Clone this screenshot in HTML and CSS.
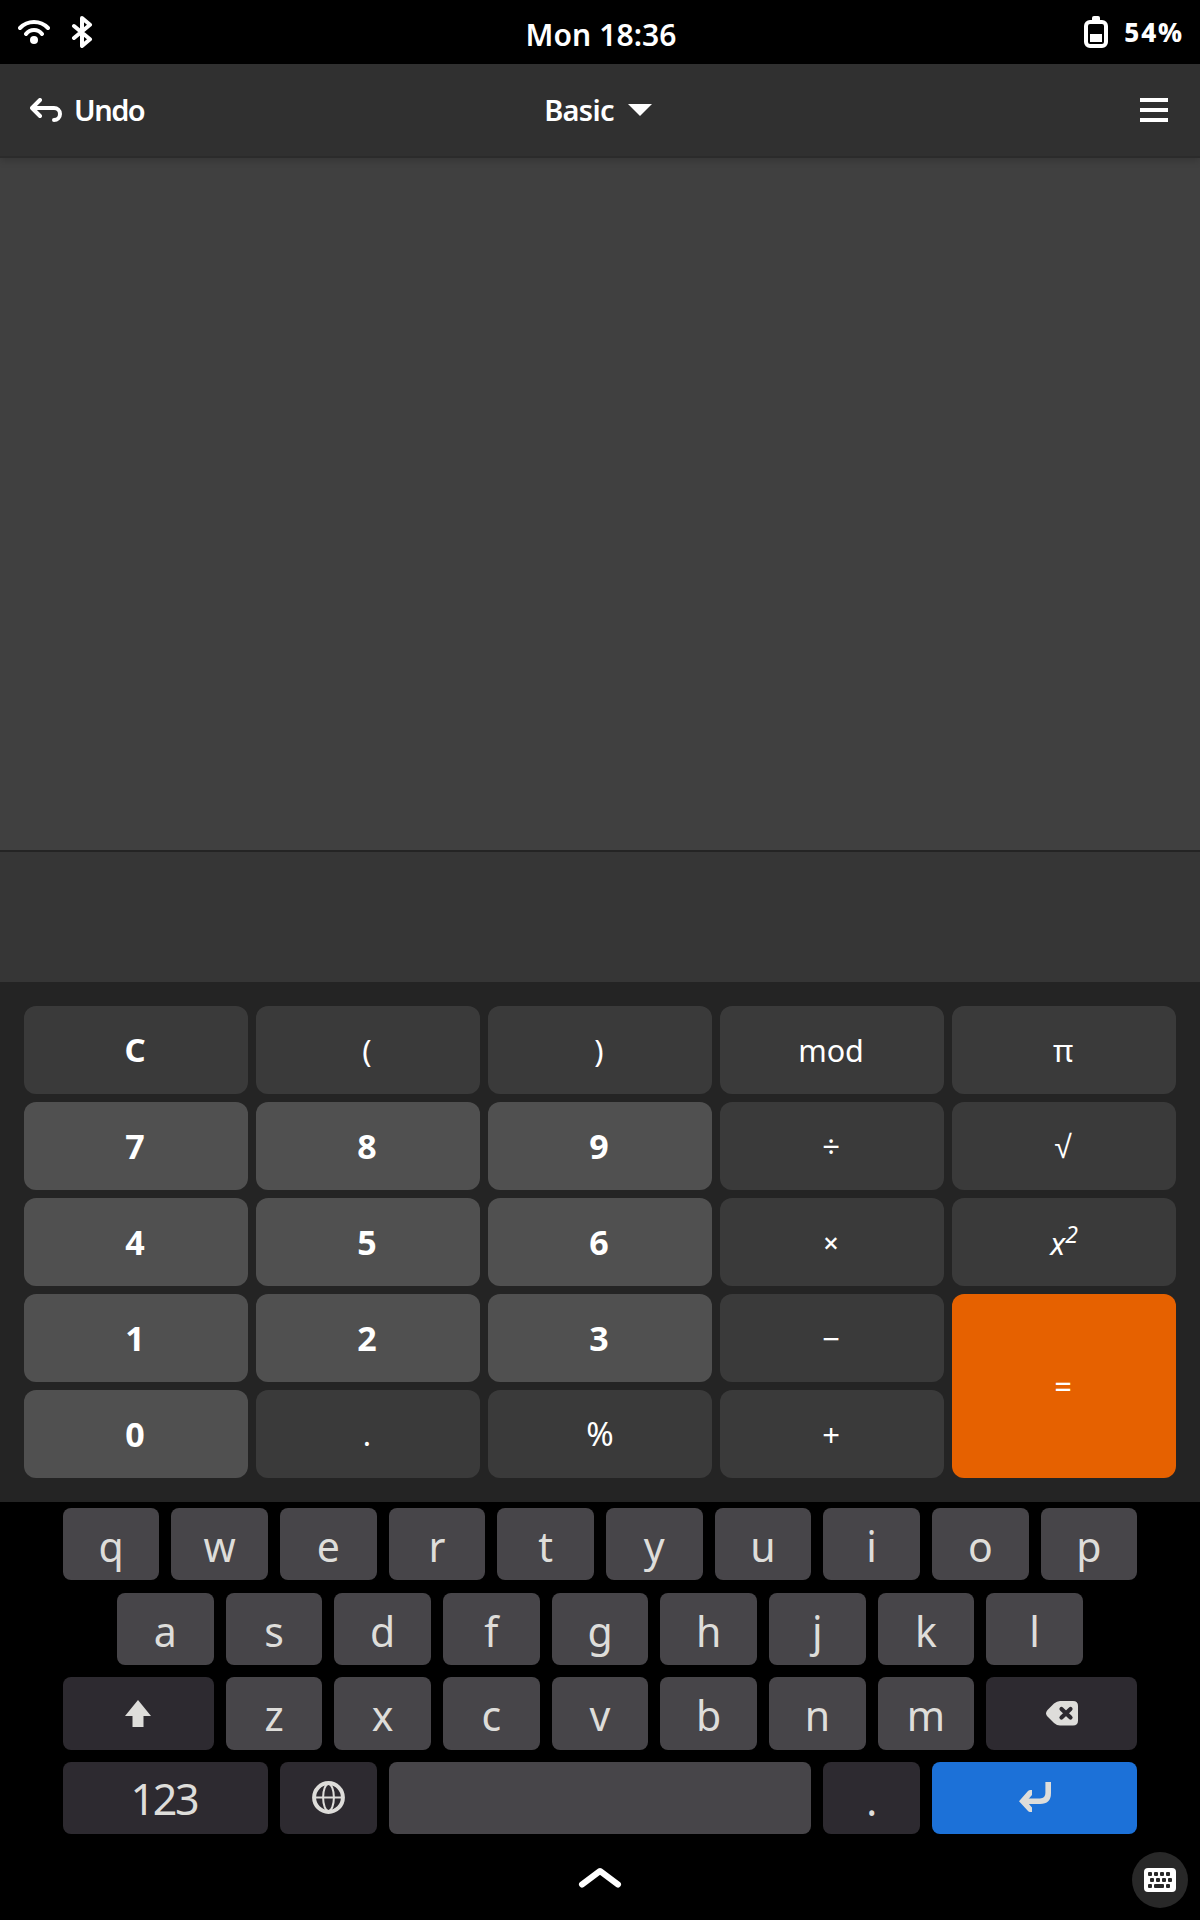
FILE: index.html
```html
<!DOCTYPE html>
<html lang="en">
<head>
<meta charset="utf-8">
<title>Calculator</title>
<link rel="stylesheet" href="styles.css">
</head>
<body>
<div class="status">
  <div class="status-icons">
    <svg width="32" height="32" viewBox="0 0 32 32" fill="none" stroke="#fff" stroke-width="4" stroke-linecap="round"><path d="M2 12a19.3 19.3 0 0 1 28 0M8 18a10 10 0 0 1 16 0"/><circle cx="16" cy="24" r="4" fill="#fff" stroke="none"/></svg>
    <svg width="32" height="32" viewBox="0 0 32 32" fill="none" stroke="#fff" stroke-width="4" stroke-linecap="round" stroke-linejoin="round"><path d="M8 10l16 13.3-8 6.7V2l8 6.7L8 22"/></svg>
  </div>
  <div class="clock">Mon 18:36</div>
  <div class="battery">
    <svg width="24" height="32" viewBox="0 0 24 32"><path fill="#fff" d="M8 5V2q0-2 2-2h4q2 0 2 2v3z"/><rect x="2" y="6" width="20" height="24" rx="4" fill="none" stroke="#fff" stroke-width="4"/><path fill="#fff" d="M6 18h12v8H6z"/></svg>
    <span class="percent">54%</span>
  </div>
</div>
<header class="header">
  <div class="undo">
    <svg width="32" height="24" viewBox="0 0 32 24" fill="none" stroke="#fff" stroke-width="4" stroke-linecap="round" stroke-linejoin="round"><path d="M10 2L2 10l8 8M2 10h22a6 6 0 0 1 0 12"/></svg>
    <span class="undo-label">Undo</span>
  </div>
  <div class="mode">
    <span class="mode-label">Basic</span>
    <svg width="24" height="12" viewBox="0 0 24 12"><path fill="#fff" d="M0 0h24L12 12z"/></svg>
  </div>
  <svg class="menu" width="28" height="24" viewBox="0 0 28 24"><path fill="#fff" d="M0 0h28v4H0zM0 10h28v4H0zM0 20h28v4H0z"/></svg>
</header>
<main class="history"></main>
<div class="entry"></div>
<div class="pad">
  <div class="btn clear">C</div><div class="btn">(</div><div class="btn">)</div><div class="btn mod">mod</div><div class="btn">π</div>
  <div class="btn num">7</div><div class="btn num">8</div><div class="btn num">9</div><div class="btn op">÷</div><div class="btn root">√</div>
  <div class="btn num">4</div><div class="btn num">5</div><div class="btn num">6</div><div class="btn op times">×</div><div class="btn square"><i>x</i><i class="exp">2</i></div>
  <div class="btn num">1</div><div class="btn num">2</div><div class="btn num">3</div><div class="btn op">−</div><div class="btn op equals">=</div>
  <div class="btn num">0</div><div class="btn">.</div><div class="btn percent-key">%</div><div class="btn op">+</div>
</div>
<div class="keyboard">
  <div class="key">q</div><div class="key">w</div><div class="key">e</div><div class="key">r</div><div class="key">t</div><div class="key">y</div><div class="key">u</div><div class="key">i</div><div class="key">o</div><div class="key">p</div>
  <div class="key home">a</div><div class="key">s</div><div class="key">d</div><div class="key">f</div><div class="key">g</div><div class="key">h</div><div class="key">j</div><div class="key">k</div><div class="key">l</div>
  <div class="key wide dark icon"><svg width="26" height="27" viewBox="0 0 26 27"><path fill="#deddda" d="M13 0l13 16h-7.500v11h-11V16H0z"/></svg></div>
  <div class="key">z</div><div class="key">x</div><div class="key">c</div><div class="key">v</div><div class="key">b</div><div class="key">n</div><div class="key">m</div>
  <div class="key wide dark icon"><svg width="32" height="25" viewBox="0 0 32 25"><path fill="#deddda" d="M14 0h13q5 0 5 5v14.500q0 5-5 5H14q-3 0-6-2.500l-6.500-6.500q-3-3.250 0-6.500L8 2.500Q11 0 14 0z"/><path d="M15.500 8l9 8.500m0-8.500l-9 8.500" stroke="#2d2a30" stroke-width="4.200" stroke-linecap="round"/></svg></div>
  <div class="key wider dark digits">123</div>
  <div class="key dark icon"><svg width="33" height="33" viewBox="0 0 33 33" fill="none" stroke="#deddda"><circle cx="16.500" cy="16.500" r="14.400" stroke-width="4"/><ellipse cx="16.500" cy="16.500" rx="5.400" ry="13.500" stroke-width="2"/><path d="M2 16.500h29" stroke-width="2"/></svg></div>
  <div class="key space"></div>
  <div class="key dark">.</div>
  <div class="key wider enter icon"><svg width="32" height="31" viewBox="0 0 32 31"><path d="M29.200 0v11q0 8.200-8.200 8.200H4.500" fill="none" stroke="#deddda" stroke-width="5.600"/><path fill="#deddda" d="M0 19.200L9 9q1-1 2.500-1H13v5l-5.500 6.200 5.500 6.300V30h-2q-1.200 0-2-1z"/></svg></div>
</div>
<footer class="bottom">
  <svg class="chevron" width="44" height="22" viewBox="0 0 44 22"><path d="M4 17.500L22 4l18 13.500" fill="none" stroke="#fff" stroke-width="6" stroke-linecap="round" stroke-linejoin="round"/></svg>
  <div class="osk"><svg width="32" height="24" viewBox="0 0 32 24"><rect width="32" height="24" rx="4" fill="#fff"/><g fill="#282828"><rect x="4" y="4" width="4" height="4" rx="1"/><rect x="10" y="4" width="4" height="4" rx="1"/><rect x="16" y="4" width="4" height="4" rx="1"/><rect x="22" y="4" width="4" height="4" rx="1"/><rect x="6" y="10" width="4" height="4" rx="1"/><rect x="12" y="10" width="4" height="4" rx="1"/><rect x="18" y="10" width="4" height="4" rx="1"/><rect x="24" y="10" width="4" height="4" rx="1"/><rect x="4" y="16" width="4" height="4" rx="1"/><rect x="10" y="16" width="10" height="4" rx="1"/><rect x="22" y="16" width="4" height="4" rx="1"/></g></svg></div>
</footer>
</body>
</html>
```
FILE: styles.css
```css
* { box-sizing: border-box; }
svg { display: block; flex: none; }
body {
  margin: 0;
  width: 1200px;
  height: 1920px;
  display: flex;
  flex-direction: column;
  background: #000;
  color: #fff;
  font-family: "Noto Sans", sans-serif;
  overflow: hidden;
}
.status {
  height: 64px;
  display: grid;
  grid-template-columns: 1fr auto 1fr;
  grid-template-rows: 64px;
  align-items: center;
  padding: 0 16px 0 18px;
}
.status-icons { display: flex; gap: 16px; }
.clock { font-size: 30px; line-height: 58px; font-weight: 600; padding-top: 6px; letter-spacing: 0.1px; }
.battery { display: flex; align-items: center; justify-content: flex-end; gap: 16px; }
.percent { font-size: 26px; line-height: 64px; font-weight: 800; letter-spacing: 1.900px; }
.header {
  height: 94px;
  display: grid;
  grid-template-columns: 1fr auto 1fr;
  align-items: center;
  padding: 0 32px 0 30px;
  background: #303030;
  border-bottom: 2px solid #2b2b2b;
  box-shadow: 0 2px 8px rgba(0, 0, 0, 0.2);
  position: relative;
}
.undo, .mode { display: flex; align-items: center; }
.undo { gap: 12px; }
.mode { gap: 14px; margin-right: 2px; }
.undo-label, .mode-label { font-size: 29px; line-height: 88px; font-weight: 600; }
.undo-label { letter-spacing: -1.500px; }
.mode-label { letter-spacing: -0.700px; }
.menu { justify-self: end; }
.history { height: 692px; background: #404040; }
.entry {
  height: 132px;
  background: #363636;
  border-top: 2px solid #242424;
}
.pad {
  height: 520px;
  padding: 24px;
  display: grid;
  grid-template-columns: repeat(5, 1fr);
  grid-template-rows: repeat(5, 88px);
  gap: 8px;
  background: #242424;
}
.btn {
  display: flex;
  justify-content: center;
  align-items: center;
  border-radius: 12px;
  padding-right: 2px;
  background: #3a3a3a;
  font-size: 31px;
  line-height: 88px;
}
.num, .clear { font-size: 34px; font-weight: 700; }
.clear { font-size: 33px; }
.num { background: #505050; }
.mod { font-size: 30.500px; }
.root { font-size: 32px; font-weight: 500; }
.times { font-size: 27px; font-weight: 500; padding-top: 2px; }
.square { padding: 2px 0 0; }
.exp { font-size: 23px; line-height: 1; padding-bottom: 18px; }
.percent-key { font-size: 33px; padding-right: 0; }
.equals { grid-row: span 2; background: #e66100; }
.keyboard {
  height: 332px;
  padding: 6px 62.800px 0;
  display: grid;
  grid-template-columns: repeat(20, 1fr);
  grid-template-rows: repeat(4, 72.400px);
  gap: 12.200px;
}
.key {
  grid-column: span 2;
  display: flex;
  justify-content: center;
  align-items: center;
  border-radius: 8px;
  padding-top: 4px;
  background: #474549;
  color: #deddda;
  font-size: 41px;
  line-height: 68px;
}
.icon { padding: 0; }
.home { grid-column: 2 / span 2; }
.wide { grid-column: span 3; }
.wider { grid-column: span 4; }
.space { grid-column: span 8; }
.dark { background: #2d2a30; }
.enter { background: #1c71d8; }
.digits { font-size: 43px; letter-spacing: -2.400px; padding: 3px 3px 0 0; }
.bottom {
  flex: 1;
  display: grid;
  grid-template-columns: 1fr auto 1fr;
  align-items: center;
  padding: 6px 12px 0;
}
.chevron { grid-column: 2; margin-bottom: 4px; }
.osk {
  width: 56px;
  height: 56px;
  border-radius: 50%;
  background: #282828;
  display: flex;
  align-items: center;
  justify-content: center;
  justify-self: end;
}
```
